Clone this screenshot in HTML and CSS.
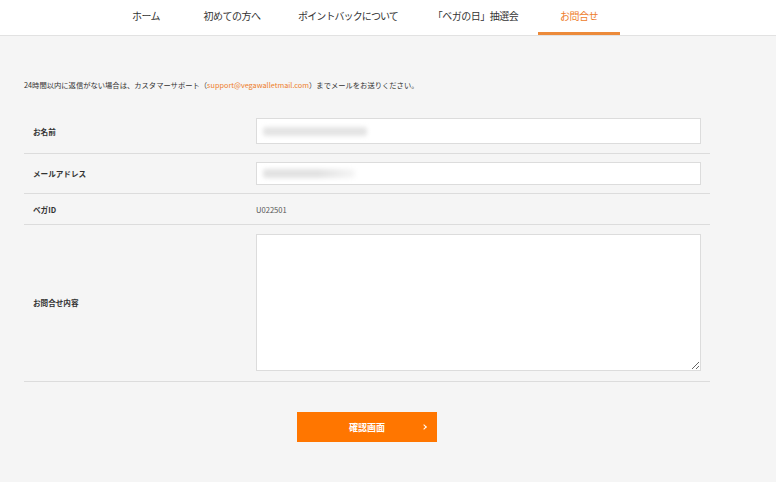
FILE: index.html
```html
<!DOCTYPE html>
<html lang="ja">

<head>
    <meta charset="UTF-8">
    <title>お問合せ</title>
    <link rel="stylesheet" href="styles.css">
</head>

<body>
    <div class="header">
        <ul class="nav">
            <li class="nav-home">ホーム</li>
            <li class="nav-first">初めての方へ</li>
            <li class="nav-point">ポイントバックについて</li>
            <li class="nav-day">「ベガの日」抽選会</li>
            <li class="nav-contact active">お問合せ</li>
        </ul>
    </div>

    <div class="main">
        <p class="note">24時間以内に返信がない場合は、カスタマーサポート（<span class="mail">support@vegawalletmail.com</span>）までメールをお送りください。</p>

        <div class="form">
            <div class="row row-name">
                <div class="label">お名前</div>
                <div class="field">
                    <div class="input"><span class="blur blur-name"></span></div>
                </div>
            </div>
            <div class="row row-mail">
                <div class="label">メールアドレス</div>
                <div class="field">
                    <div class="input input-mail"><span class="blur blur-mail"></span></div>
                </div>
            </div>
            <div class="row row-id">
                <div class="label">ベガID</div>
                <div class="field value">U022501</div>
            </div>
            <div class="row row-body">
                <div class="label">お問合せ内容</div>
                <div class="field">
                    <textarea class="textarea"></textarea>
                </div>
            </div>
        </div>

        <div class="submit">
            <a class="btn">確認画面<span class="arrow"></span></a>
        </div>
    </div>
</body>

</html>
```

FILE: styles.css
```css
* {
    margin: 0;
    padding: 0;
    box-sizing: border-box;
}

body {
    background-color: #f5f5f5;
    font-family: "Noto Sans CJK JP", "Noto Sans", sans-serif;
    color: #333;
    width: 776px;
    height: 482px;
    overflow: hidden;
}

.header {
    background-color: #fff;
    height: 36px;
    border-bottom: 1px solid #e2e2e2;
}

.nav {
    list-style: none;
    display: flex;
    margin-left: 111px;
    height: 35px;
}

.nav li {
    font-size: 10px;
    line-height: 32px;
    text-align: center;
    color: #333;
    letter-spacing: -0.5px;
    border-bottom: 3px solid transparent;
    white-space: nowrap;
}

.nav-home { width: 70px; }
.nav-first { width: 102px; }
.nav-point { width: 130px; letter-spacing: -0.9px !important; }
.nav-day { width: 125px; }
.nav-contact { width: 82px; }

.nav .active {
    color: #ee7d2a;
    border-bottom-color: #ec8a3a;
}

.main {
    padding: 0 66px 0 24px;
}

.note {
    font-size: 7.3px;
    margin-top: 43px;
    line-height: 12px;
    color: #333;
}

.note .mail {
    color: #ee7d2a;
}

.form {
    margin-top: 18px;
}

.row {
    display: flex;
    align-items: center;
    border-bottom: 1px solid #dcdcdc;
    padding: 9px 9px;
}

.label {
    width: 223px;
    font-size: 7.6px;
    font-weight: bold;
    color: #333;
}

.field {
    flex: 1;
}

.input {
    height: 26px;
    background-color: #fff;
    border: 1px solid #dcdcdc;
    display: flex;
    align-items: center;
    padding-left: 6px;
}

.row-mail {
    padding-top: 8px;
    padding-bottom: 8px;
}

.input-mail {
    height: 23px;
}

.blur {
    display: block;
    height: 9px;
    background-color: #e4e4e4;
    filter: blur(2px);
    border-radius: 3px;
}

.blur-name {
    width: 104px;
}

.blur-mail {
    width: 92px;
    background: linear-gradient(to right, #e2e2e2 60%, #f6f6f6);
}

.row-id {
    height: 31px;
    padding-top: 0;
    padding-bottom: 0;
}

.value {
    font-size: 7.6px;
    color: #555;
}

.row-body {
    padding-bottom: 10px;
}

.textarea {
    display: block;
    width: 100%;
    height: 137px;
    border: 1px solid #dcdcdc;
    background-color: #fff;
    font-family: inherit;
}

.submit {
    display: flex;
    justify-content: center;
    padding-top: 30px;
}

.btn {
    width: 140px;
    height: 30px;
    background-color: #ff7600;
    color: #fff;
    font-size: 9px;
    font-weight: bold;
    display: flex;
    align-items: center;
    justify-content: center;
    position: relative;
    cursor: pointer;
}

.btn .arrow {
    position: absolute;
    right: 11px;
    top: 13px;
    width: 4px;
    height: 4px;
    border-top: 1.3px solid #fff;
    border-right: 1.3px solid #fff;
    transform: rotate(45deg);
}
```
